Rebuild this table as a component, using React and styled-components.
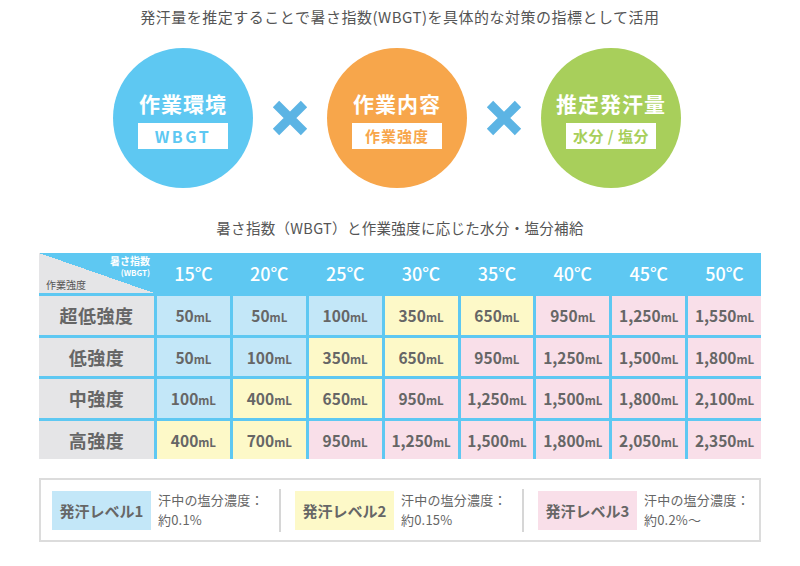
import React from "react";
import styled, { createGlobalStyle } from "styled-components";

const GlobalStyle = createGlobalStyle`
  html, body { margin: 0; padding: 0; background: #fff; }
  body { font-family: "Noto Sans CJK JP", "Noto Sans", sans-serif; color: #666; }
`;

const BLUE = "#5ec8f2";
const ORANGE = "#f7a64b";
const GREEN = "#a8cf5b";
const CELL = { blue: "#c3e7f8", yellow: "#fdf9c8", pink: "#f9dfe9", gray: "#e5e5e7" };

const Page = styled.div`
  width: 800px;
  height: 566px;
  display: flex;
  flex-direction: column;
  align-items: center;
`;

const Title = styled.h1`
  margin: 7px 0 0;
  font-size: 15px;
  line-height: 20px;
  font-weight: 400;
  color: #555;
  letter-spacing: 0.5px;
`;

const CircleRow = styled.div`
  margin-top: 21px;
  display: flex;
  align-items: center;
  gap: 19px;
  padding-right: 6px;
`;

const Circle = styled.div`
  width: 140px;
  height: 140px;
  border-radius: 50%;
  background: ${(p) => p.$color};
  display: flex;
  flex-direction: column;
  align-items: center;
  justify-content: center;
`;

const CircleHead = styled.div`
  color: #fff;
  font-size: 21px;
  font-weight: 700;
  letter-spacing: 1px;
  line-height: 28px;
  margin-bottom: 6px;
  margin-top: 1px;
`;

const CircleTag = styled.div`
  width: 90px;
  height: 26px;
  background: #fff;
  color: ${(p) => p.$color};
  font-size: ${(p) => p.$size || 15}px;
  font-weight: 700;
  letter-spacing: ${(p) => p.$ls || 1}px;
  display: flex;
  align-items: center;
  justify-content: center;
`;

const Times = () => (
  <svg width="36" height="36" viewBox="0 0 36 36">
    <path d="M4 4 L32 32 M32 4 L4 32" stroke="#5cb4e4" strokeWidth="9" strokeLinecap="butt" />
  </svg>
);

const SubTitle = styled.h2`
  margin: 30px 0 0;
  font-size: 14.5px;
  line-height: 20px;
  font-weight: 400;
  color: #555;
  letter-spacing: 0.3px;
`;

const Table = styled.div`
  margin-top: 15px;
  width: 722px;
  display: grid;
  grid-template-columns: 115px repeat(8, 1fr);
  grid-template-rows: 40px repeat(4, 38.5px);
  gap: 3px;
  background: ${BLUE};
`;

const Corner = styled.div`
  display: grid;
  background: linear-gradient(to top right, ${CELL.gray} 50%, ${BLUE} 50%);
  padding: 1px 4px 2px 7px;
`;

const CornerTop = styled.div`
  grid-area: 1 / 1;
  justify-self: end;
  align-self: start;
  text-align: right;
  color: #fff;
  font-weight: 700;
`;

const CornerLine = styled.div`
  font-size: ${(p) => p.$size}px;
  line-height: ${(p) => p.$lh}px;
`;

const CornerBottom = styled.div`
  grid-area: 1 / 1;
  justify-self: start;
  align-self: end;
  font-size: 10px;
  line-height: 12px;
  color: #555;
`;

const HeadCell = styled.div`
  background: ${BLUE};
  color: #fff;
  font-size: 18px;
  font-weight: 500;
  display: flex;
  align-items: center;
  justify-content: center;
`;

const RowLabel = styled.div`
  background: ${CELL.gray};
  color: #666;
  font-size: 18px;
  font-weight: 700;
  letter-spacing: 0.5px;
  display: flex;
  align-items: center;
  justify-content: center;
`;

const Cell = styled.div`
  background: ${(p) => CELL[p.$tone]};
  color: #666;
  display: flex;
  align-items: baseline;
  justify-content: center;
  padding-top: 9px;
  box-sizing: border-box;
`;

const Num = styled.span`
  font-size: 15.5px;
  font-weight: 700;
  line-height: 20px;
`;

const Unit = styled.span`
  font-size: 11.5px;
  font-weight: 700;
`;

const Legend = styled.div`
  margin-top: 19px;
  width: 722px;
  height: 64px;
  box-sizing: border-box;
  border: 2px solid #dcdcdc;
  display: flex;
  align-items: center;
  padding: 0 8px 0 11px;
`;

const LegendItem = styled.div`
  flex: 1;
  display: flex;
  align-items: center;
  gap: 7px;
`;

const LevelTag = styled.div`
  width: 99px;
  height: 39px;
  background: ${(p) => CELL[p.$tone]};
  color: #666;
  font-size: 15px;
  font-weight: 700;
  display: flex;
  align-items: center;
  justify-content: center;
  flex-shrink: 0;
`;

const LevelDesc = styled.div`
  font-size: 13px;
  line-height: 20px;
  color: #666;
  letter-spacing: 0.2px;
`;

const Divider = styled.div`
  width: 2px;
  height: 43px;
  background: #d6d6d6;
  margin: 0 14px;
`;

const temps = ["15℃", "20℃", "25℃", "30℃", "35℃", "40℃", "45℃", "50℃"];
const rows = [
  ["超低強度", [50, 50, 100, 350, 650, 950, 1250, 1550]],
  ["低強度", [50, 100, 350, 650, 950, 1250, 1500, 1800]],
  ["中強度", [100, 400, 650, 950, 1250, 1500, 1800, 2100]],
  ["高強度", [400, 700, 950, 1250, 1500, 1800, 2050, 2350]],
];

const toneOf = (v) => (v <= 100 ? "blue" : v <= 700 ? "yellow" : "pink");

const levels = [
  ["blue", "発汗レベル1", "約0.1%"],
  ["yellow", "発汗レベル2", "約0.15%"],
  ["pink", "発汗レベル3", "約0.2%〜"],
];

export default function App() {
  return (
    <>
      <GlobalStyle />
      <Page>
        <Title>発汗量を推定することで暑さ指数(WBGT)を具体的な対策の指標として活用</Title>
        <CircleRow>
          <Circle $color={BLUE}>
            <CircleHead>作業環境</CircleHead>
            <CircleTag $color={BLUE} $size={16} $ls={2.5}>WBGT</CircleTag>
          </Circle>
          <Times />
          <Circle $color={ORANGE}>
            <CircleHead>作業内容</CircleHead>
            <CircleTag $color={ORANGE}>作業強度</CircleTag>
          </Circle>
          <Times />
          <Circle $color={GREEN}>
            <CircleHead>推定発汗量</CircleHead>
            <CircleTag $color={GREEN} $ls={0.5}>水分 / 塩分</CircleTag>
          </Circle>
        </CircleRow>
        <SubTitle>暑さ指数（WBGT）と作業強度に応じた水分・塩分補給</SubTitle>
        <Table>
          <Corner>
            <CornerTop>
              <CornerLine $size={10} $lh={13}>暑さ指数</CornerLine>
              <CornerLine $size={8} $lh={12}>(WBGT)</CornerLine>
            </CornerTop>
            <CornerBottom>作業強度</CornerBottom>
          </Corner>
          {temps.map((t) => (
            <HeadCell key={t}>{t}</HeadCell>
          ))}
          {rows.map(([label, vals]) => (
            <React.Fragment key={label}>
              <RowLabel>{label}</RowLabel>
              {vals.map((v, i) => (
                <Cell key={i} $tone={toneOf(v)}>
                  <Num>{v.toLocaleString("en-US")}</Num>
                  <Unit>mL</Unit>
                </Cell>
              ))}
            </React.Fragment>
          ))}
        </Table>
        <Legend>
          {levels.map(([tone, name, pct], i) => (
            <React.Fragment key={name}>
              {i > 0 && <Divider />}
              <LegendItem>
                <LevelTag $tone={tone}>{name}</LevelTag>
                <LevelDesc>
                  汗中の塩分濃度：
                  <br />
                  {pct}
                </LevelDesc>
              </LegendItem>
            </React.Fragment>
          ))}
        </Legend>
      </Page>
    </>
  );
}
